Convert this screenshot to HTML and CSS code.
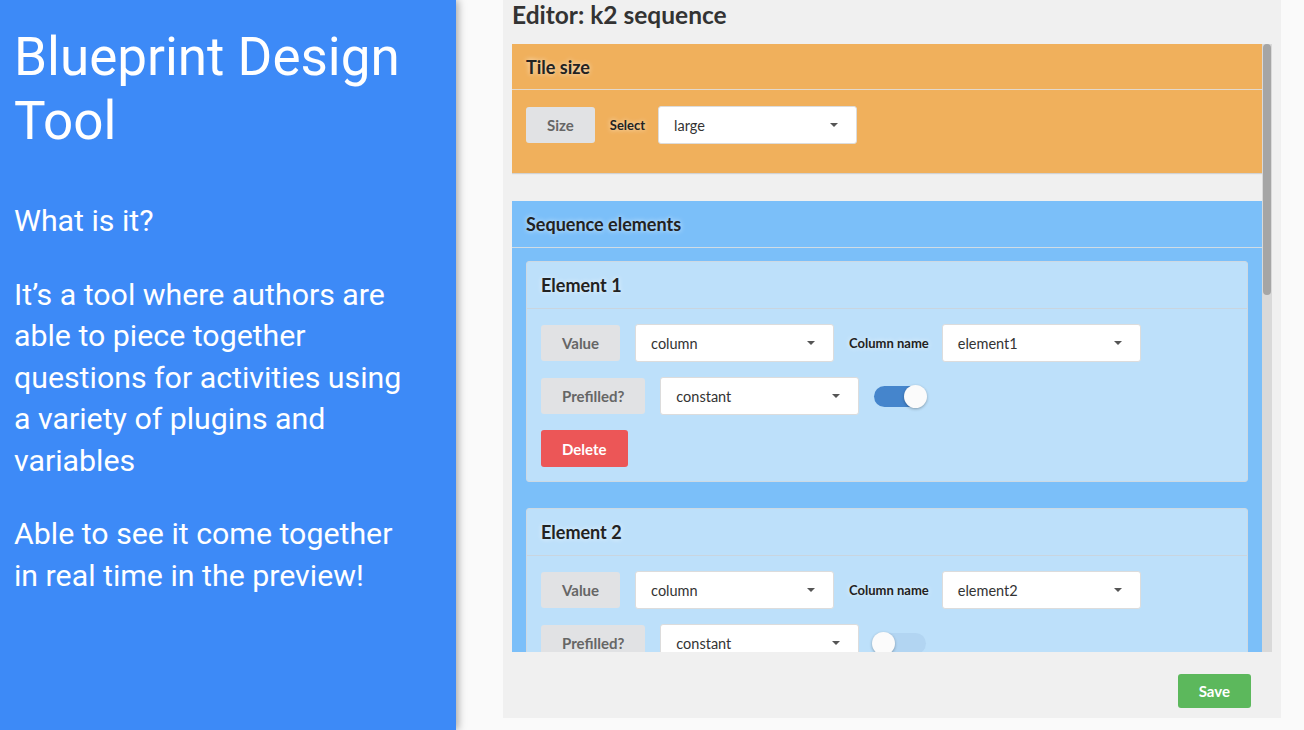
FILE: index.html
```html
<!DOCTYPE html>
<html lang="en">
<head>
  <meta charset="UTF-8">
  <meta name="viewport" content="width=device-width, initial-scale=1.0">
  <title>Blueprint Design Tool</title>
  <link rel="stylesheet" href="styles.css">
</head>
<body>
  <div class="slide">
    <section class="intro">
      <h1>Blueprint Design Tool</h1>
      <p>What is it?</p>
      <p>It’s a tool where authors are able to piece together questions for activities using a variety of plugins and variables</p>
      <p>Able to see it come together in real time in the preview!</p>
    </section>

    <main class="stage">
      <div class="editor">
        <h2 class="editor-title">Editor: k2 sequence</h2>

        <div class="editor-body">
          <div class="editor-scroll">
            <div class="panel panel-tile">
              <div class="panel-heading">Tile size</div>
              <div class="panel-body">
                <div class="field-row">
                  <span class="tag">Size</span>
                  <span class="field-label">Select</span>
                  <div class="select">large</div>
                </div>
              </div>
            </div>

            <div class="panel panel-seq">
              <div class="panel-heading">Sequence elements</div>
              <div class="panel-body">
                <div class="card">
                  <div class="card-heading">Element 1</div>
                  <div class="card-body">
                    <div class="field-row">
                      <span class="tag">Value</span>
                      <div class="select">column</div>
                      <span class="field-label">Column name</span>
                      <div class="select">element1</div>
                    </div>
                    <div class="field-row">
                      <span class="tag">Prefilled?</span>
                      <div class="select">constant</div>
                      <span class="toggle on"></span>
                    </div>
                    <div class="field-row">
                      <button class="btn btn-delete">Delete</button>
                    </div>
                  </div>
                </div>

                <div class="card">
                  <div class="card-heading">Element 2</div>
                  <div class="card-body">
                    <div class="field-row">
                      <span class="tag">Value</span>
                      <div class="select">column</div>
                      <span class="field-label">Column name</span>
                      <div class="select">element2</div>
                    </div>
                    <div class="field-row">
                      <span class="tag">Prefilled?</span>
                      <div class="select">constant</div>
                      <span class="toggle"></span>
                    </div>
                    <div class="field-row">
                      <button class="btn btn-delete">Delete</button>
                    </div>
                  </div>
                </div>

                <div class="card">
                  <div class="card-heading">Element 3</div>
                  <div class="card-body">
                    <div class="field-row">
                      <span class="tag">Value</span>
                      <div class="select">column</div>
                      <span class="field-label">Column name</span>
                      <div class="select">element3</div>
                    </div>
                    <div class="field-row">
                      <span class="tag">Prefilled?</span>
                      <div class="select">constant</div>
                      <span class="toggle"></span>
                    </div>
                    <div class="field-row">
                      <button class="btn btn-delete">Delete</button>
                    </div>
                  </div>
                </div>

                <button class="btn btn-add">Add element</button>
              </div>
            </div>
          </div>

          <div class="scrollbar">
            <div class="scrollbar-thumb"></div>
          </div>
        </div>

        <div class="editor-footer">
          <button class="btn btn-save">Save</button>
        </div>
      </div>
    </main>
  </div>
</body>
</html>
```

FILE: styles.css
```css
* {
  margin: 0;
  padding: 0;
  box-sizing: border-box;
}

body {
  width: 1304px;
  height: 730px;
  overflow: hidden;
  background: #fafafa;
}

.slide {
  display: flex;
  height: 730px;
}

/* left: slide text */
.intro {
  width: 456px;
  flex-shrink: 0;
  padding: 25px 40px 0 14px;
  background: #3d8af7;
  color: #fff;
  font-family: 'Roboto', sans-serif;
  box-shadow: 2px 0 8px rgba(0, 0, 0, 0.35);
  position: relative;
  z-index: 1;
}

.intro h1 {
  font-size: 53px;
  font-weight: 400;
  line-height: 64px;
  margin-bottom: 47px;
}

.intro p {
  font-size: 30.3px;
  line-height: 41.5px;
  margin-bottom: 32px;
}

/* right: editor */
.stage {
  flex: 1;
  padding: 0 23px 0 47px;
  background: #fafafa;
}

.editor {
  height: 718px;
  padding: 0 9px;
  background: #f0f0f0;
  display: flex;
  flex-direction: column;
  font-family: 'Lato', sans-serif;
  color: #333;
}

.editor-title {
  font-size: 24.5px;
  font-weight: 700;
  line-height: 30px;
  margin-bottom: 14px;
}

.editor-body {
  height: 608px;
  display: flex;
}

.editor-scroll {
  flex: 1;
  overflow: hidden;
}

.scrollbar {
  width: 10px;
  flex-shrink: 0;
  background: #d9d9d9;
}

.scrollbar-thumb {
  height: 251px;
  margin: 0 1px;
  border-radius: 4px;
  background: #a5a5a5;
}

.panel {
  box-shadow: 0 1px 1px rgba(0, 0, 0, 0.12);
  margin-bottom: 28px;
}

.panel-tile {
  background: #f0b05c;
}

.panel-seq {
  background: #7bbff9;
}

.panel-heading,
.card-heading {
  font-size: 18px;
  font-weight: 700;
  color: #222;
  text-shadow: 0 0 5px rgba(255, 255, 255, 0.75);
  display: flex;
  align-items: center;
  padding: 0 14px;
  border-bottom: 1px solid rgba(225, 225, 225, 0.85);
}

.panel-tile .panel-heading {
  height: 46px;
}

.panel-seq .panel-heading {
  height: 47px;
}

.panel-tile .panel-body {
  padding: 16px 14px 29px;
}

.panel-seq .panel-body {
  padding: 13px 14px 14px;
}

.card {
  background: #bde0fa;
  border: 1px solid #cdd9e3;
  border-radius: 3px;
  margin-bottom: 26px;
}

.card-heading {
  height: 47px;
  border-bottom-color: #c9d5df;
}

.card-body {
  display: flex;
  flex-direction: column;
  gap: 15px;
  padding: 15px 14px 14px;
}

.field-row {
  display: flex;
  align-items: center;
  gap: 15px;
}

.tag {
  height: 36px;
  padding: 0 21px;
  display: flex;
  align-items: center;
  background: #e1e2e4;
  border-radius: 3px;
  font-size: 15px;
  font-weight: 700;
  color: #666;
}

.field-label {
  font-size: 13px;
  font-weight: 700;
  color: #222;
  text-shadow: 0 0 5px rgba(255, 255, 255, 0.75);
  margin-right: -2px;
}

.select {
  width: 199px;
  height: 38px;
  padding: 0 18px 0 15px;
  display: flex;
  align-items: center;
  justify-content: space-between;
  background: #fff;
  border: 1px solid #dcdcdc;
  border-radius: 3px;
  font-size: 14.5px;
  color: #333;
}

.select::after {
  content: "";
  border-left: 4px solid transparent;
  border-right: 4px solid transparent;
  border-top: 4px solid #555;
}

.toggle {
  width: 52px;
  height: 21px;
  border-radius: 11px;
  background: #b2d5f2;
  position: relative;
}

.toggle::after {
  content: "";
  position: absolute;
  top: -1px;
  left: -2px;
  width: 23px;
  height: 23px;
  border-radius: 50%;
  background: #fbfbfb;
  box-shadow: 0 1px 3px rgba(0, 0, 0, 0.3);
}

.toggle.on {
  background: #4585cc;
}

.toggle.on::after {
  left: auto;
  right: -1px;
}

.btn {
  border: none;
  border-radius: 3px;
  padding: 0 21px;
  font-family: 'Lato', sans-serif;
  font-size: 15px;
  font-weight: 700;
  color: #fff;
  cursor: pointer;
}

.btn-delete {
  height: 37px;
  background: #ec5657;
}

.btn-add {
  height: 36px;
  background: #4585cc;
}

.editor-footer {
  height: 66px;
  display: flex;
  justify-content: flex-end;
  align-items: flex-start;
  padding: 22px 21px 0 0;
}

.btn-save {
  height: 34px;
  background: #5cb85c;
}
```
